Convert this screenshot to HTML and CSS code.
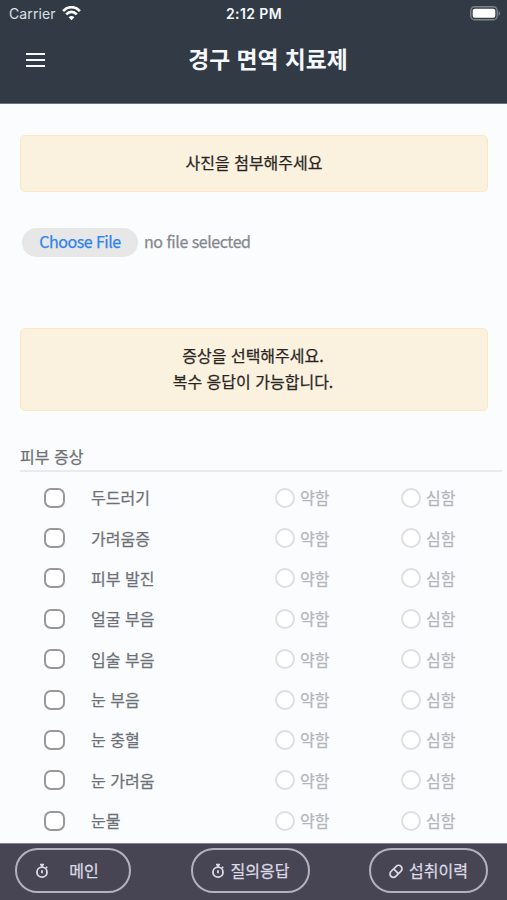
FILE: index.html
```
<!DOCTYPE html>
<html lang="ko">
<head>
<meta charset="utf-8">
<title>경구 면역 치료제</title>
<link rel="stylesheet" href="styles.css">
</head>
<body>
<svg class="defs" width="0" height="0" aria-hidden="true">
  <symbol id="timer" viewBox="0 0 14 16">
    <circle cx="7" cy="9.2" r="5" fill="none" stroke="currentColor" stroke-width="1.8"/>
    <path d="M5 1.7h4M7 1.7v2.5M11 3.8l1.2 1.2M7 7.2v3.1" fill="none" stroke="currentColor" stroke-width="1.8"/>
  </symbol>
</svg>
<div class="screen">
  <header class="header">
    <div class="status">
      <div class="carrier"><span>Carrier</span>
        <svg width="19" height="15" viewBox="0 0 19 15" fill="none" stroke="#fff" stroke-width="2.7"><path d="M1.1 5.1C6-.1 13-.1 17.9 5.1"/><path d="M4.2 8.4c3.3-3.3 7.3-3.3 10.6 0"/><path d="M9.5 14.2 6.6 11.2c1.8-1.7 4-1.7 5.8 0z" fill="#fff" stroke="none"/></svg>
      </div>
      <span class="time">2:12 PM</span>
      <svg class="battery" width="31" height="15" viewBox="0 0 31 15"><rect x=".8" y=".8" width="26.4" height="12.9" rx="3.8" fill="none" stroke="#7e8389" stroke-width="1.4"/><rect x="2.7" y="2.7" width="22.6" height="9.1" rx="2" fill="#fff"/><path d="M28.6 5v4.6c2-.8 2-3.8 0-4.6z" fill="#7e8389"/></svg>
    </div>
    <div class="titlebar">
      <div class="menu"><i></i><i></i><i></i></div>
      <h1>경구 면역 치료제</h1>
    </div>
  </header>
  <main class="content">
    <div class="notice">사진을 첨부해주세요</div>
    <div class="file"><span class="choose">Choose File</span><span class="filename">no file selected</span></div>
    <div class="notice select">증상을 선택해주세요.<br>복수 응답이 가능합니다.</div>
    <h2>피부 증상</h2>
    <div class="rows">
      <div class="row"><i class="check"></i><span>두드러기</span><label><i></i><span>약함</span></label><label><i></i><span>심함</span></label></div>
      <div class="row"><i class="check"></i><span>가려움증</span><label><i></i><span>약함</span></label><label><i></i><span>심함</span></label></div>
      <div class="row"><i class="check"></i><span>피부 발진</span><label><i></i><span>약함</span></label><label><i></i><span>심함</span></label></div>
      <div class="row"><i class="check"></i><span>얼굴 부음</span><label><i></i><span>약함</span></label><label><i></i><span>심함</span></label></div>
      <div class="row"><i class="check"></i><span>입술 부음</span><label><i></i><span>약함</span></label><label><i></i><span>심함</span></label></div>
      <div class="row"><i class="check"></i><span>눈 부음</span><label><i></i><span>약함</span></label><label><i></i><span>심함</span></label></div>
      <div class="row"><i class="check"></i><span>눈 충혈</span><label><i></i><span>약함</span></label><label><i></i><span>심함</span></label></div>
      <div class="row"><i class="check"></i><span>눈 가려움</span><label><i></i><span>약함</span></label><label><i></i><span>심함</span></label></div>
      <div class="row"><i class="check"></i><span>눈물</span><label><i></i><span>약함</span></label><label><i></i><span>심함</span></label></div>
    </div>
  </main>
  <nav class="footer">
    <a class="main"><svg width="14" height="16"><use href="#timer"/></svg><span>메인</span></a>
    <a><svg width="14" height="16"><use href="#timer"/></svg><span>질의응답</span></a>
    <a><svg width="14" height="16" viewBox="0 0 14 16" fill="none" stroke="currentColor" stroke-width="1.7"><g transform="rotate(-45 7 8.3)"><rect x="-.1" y="4.9" width="14.2" height="6.8" rx="3.4"/><path d="M7 5v6.6"/></g></svg><span>섭취이력</span></a>
  </nav>
</div>
</body>
</html>
```
FILE: styles.css
```
* { box-sizing: border-box; }
body {
  margin: 0;
  background: #fbfcfe;
  color: #6c7077;
  font: 16px/26px "Noto Sans CJK KR", sans-serif;
  -webkit-text-stroke: .25px;
}
.defs { display: none; }
.screen { display: flex; flex-direction: column; height: 900px; overflow: hidden; }
.header { flex: none; height: 104px; background: #323a46; border-bottom: 1px solid #70757d; color: #f5f8fc; -webkit-text-stroke: 0; }
.status {
  display: grid;
  grid-template-columns: 1fr auto 1fr;
  align-items: center;
  height: 28px;
  padding: 0 6px 0 9px;
  font: 14px/28px Inter, sans-serif;
}
.carrier { display: flex; align-items: center; gap: 6px; color: #dde0e5; letter-spacing: .1px; }
.carrier svg { margin-top: -2px; }
.time { font-weight: 600; letter-spacing: .4px; margin-left: -2px; }
.battery { justify-self: end; margin-top: -1px; }
.titlebar { display: grid; grid-template-columns: 45px 1fr 16px; align-items: center; height: 62px; }
.menu { display: grid; gap: 4px; width: 19px; margin: 1px 0 0 26px; }
.menu i { height: 2px; background: #f5f8fc; }
h1 { margin: 0; font-size: 22.8px; line-height: 34px; font-weight: 700; text-align: center; }
.content { flex: 1; min-height: 0; padding: 31px 5px 0 20px; }
.notice {
  width: 468px;
  height: 57px;
  padding: 13px 15px 15px;
  border: 1px solid #fbe8c2;
  border-radius: 5px;
  background: #faf1df;
  color: #29251e;
  text-align: center;
}
.file { display: flex; align-items: flex-start; gap: 6px; height: 30px; margin: 36px 0 70px 2px; color: #85888e; letter-spacing: -.45px; }
.choose { width: 116px; height: 29px; border-radius: 15px; background: #e7e7e8; color: #2c83f2; line-height: 27px; text-align: center; letter-spacing: -.5px; }
.filename { line-height: 26px; }
.select { height: 83px; padding-right: 17px; }
h2 { height: 29px; margin: 32px 0 6px; border-bottom: 2px solid #e8eaec; font-size: 16px; line-height: 27px; font-weight: 400; }
.rows { display: grid; grid-auto-rows: 40.35px; margin-top: -.4px; }
.row { display: grid; grid-template-columns: 71px 184px 126px 1fr; align-items: center; }
.row span { position: relative; top: -.6px; }
.check { width: 21px; height: 20px; margin-left: 24px; border: 2px solid #98989b; border-radius: 7px; background: #fff; }
label { display: flex; align-items: center; gap: 5px; color: #b3b5b9; }
label i { width: 20px; height: 20px; border: 2px solid #dedfe1; border-radius: 50%; background: #fff; }
.footer {
  display: flex;
  flex: none;
  justify-content: space-between;
  align-items: flex-start;
  height: 57px;
  padding: 4px 19px 0 15px;
  border-top: 1px solid #85838f;
  background: #474554;
}
.footer a { display: flex; align-items: center; justify-content: center; gap: 6px; width: 119px; height: 45px; border: 2px solid #b4b0c0; border-radius: 23px; color: #dddbe5; }
.footer a span { margin-top: -2px; }
.footer .main { gap: 20px; width: 116px; padding-right: 12px; }
```
